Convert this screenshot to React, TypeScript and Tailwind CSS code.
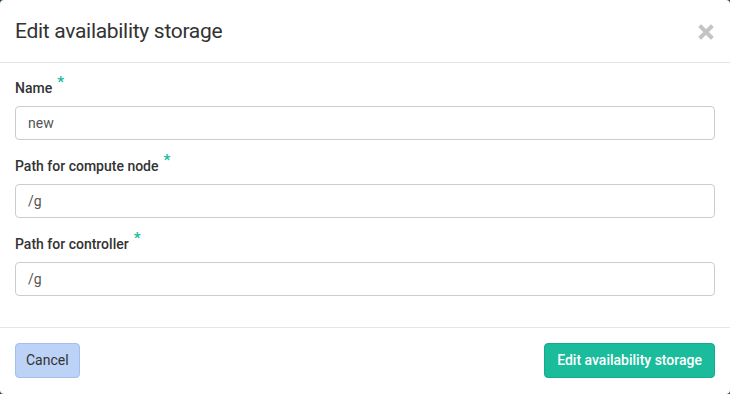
import React from "react";

function Field({ label, value }: { label: string; value: string }) {
  return (
    <div className="mb-4">
      <label className="flex items-start h-5 mb-2 text-[14px] leading-5 font-medium text-[#333]">
        {label}
        <span className="ml-[5px] -mt-[4px] text-[#1abc9c] text-[15px] font-bold leading-4">*</span>
      </label>
      <div className="h-[34px] border border-[#cccccc] rounded-[4px] px-3 flex items-center text-[14px] text-[#555]">
        {value}
      </div>
    </div>
  );
}

export default function App() {
  return (
    <div
      className="w-[730px] h-[394px] bg-[#1e4a44]"
      style={{ fontFamily: 'Roboto, "Liberation Sans", Arial, sans-serif' }}
    >
      <div className="w-full h-full bg-white rounded-[4px] flex flex-col">
        <div className="h-[63px] border-b border-[#e5e5e5] px-[15px] pt-[1px] flex items-center justify-between">
          <h1 className="text-[21px] text-[#333] tracking-[-0.3px]">Edit availability storage</h1>
          <svg width="16" height="16" viewBox="0 0 16 16" className="mr-[1px]">
            <path d="M3 3 L13 13 M13 3 L3 13" stroke="#c4c4c4" strokeWidth="4" strokeLinecap="square" />
          </svg>
        </div>
        <div className="px-[15px] pt-[15px] pb-[15px]">
          <Field label="Name" value="new" />
          <Field label="Path for compute node" value="/g" />
          <Field label="Path for controller" value="/g" />
        </div>
        <div className="border-t border-[#e5e5e5] px-[15px] pt-[15px] flex justify-between">
          <button className="h-[35px] px-[10px] rounded-[4px] bg-[#bcd2f6] border border-[#a3bff0] text-[14px] text-[#333]">
            Cancel
          </button>
          <button className="h-[35px] px-3 rounded-[4px] bg-[#1abc9c] border border-[#17a98c] text-[14px] font-medium text-white">
            Edit availability storage
          </button>
        </div>
      </div>
    </div>
  );
}
